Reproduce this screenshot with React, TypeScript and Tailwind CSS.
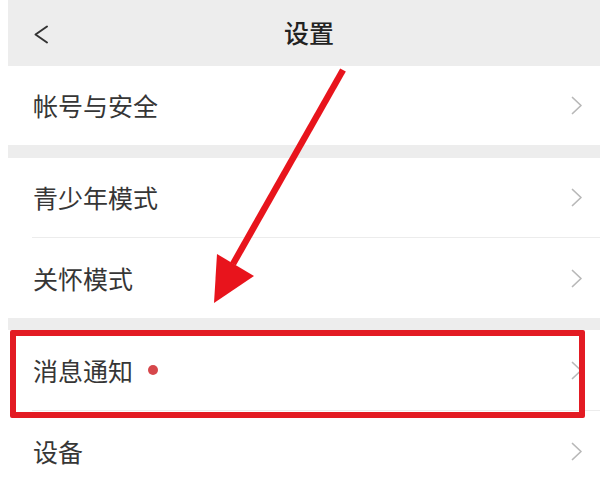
const font = { fontFamily: '"Noto Sans CJK SC", "Noto Sans", sans-serif' };

function Chevron() {
  return (
    <svg width="12" height="19" viewBox="0 0 12 19" className="shrink-0">
      <polyline
        points="1.5,1.5 10,9.5 1.5,17.5"
        fill="none"
        stroke="#b8b8b8"
        strokeWidth="1.7"
        strokeLinecap="round"
        strokeLinejoin="round"
      />
    </svg>
  );
}

function Row({
  label,
  dot,
  divider,
  h = "h-[80px]",
}: {
  label: string;
  dot?: boolean;
  divider?: boolean;
  h?: string;
}) {
  return (
    <div className="bg-white">
      <div className={`flex items-center justify-between pl-[25px] pr-[17px] ${h}`}>
        <div className="flex items-center gap-[15px]">
          <span className="text-[25px] leading-none text-[#363636]">{label}</span>
          {dot && <span className="w-[10px] h-[10px] rounded-full bg-[#d6474b]" />}
        </div>
        <Chevron />
      </div>
      {divider && <div className="ml-[24px] h-px bg-[#ececec]" />}
    </div>
  );
}

export default function App() {
  return (
    <div className="relative w-[600px] h-[481px] overflow-hidden bg-white pl-[8px]" style={font}>
      <div className="flex flex-col bg-[#ededed]">
        {/* header */}
        <div className="relative flex items-center justify-center h-[66px]">
          <svg
            width="16"
            height="19"
            viewBox="0 0 16 19"
            className="absolute left-[25px] top-[25px]"
          >
            <polyline
              points="14,1.5 2.5,9.5 14,17.5"
              fill="none"
              stroke="#333333"
              strokeWidth="2"
              strokeLinecap="round"
              strokeLinejoin="round"
            />
          </svg>
          <span className="text-[25px] font-medium leading-none text-[#222222] pl-[10px] pb-[1px]">设置</span>
        </div>

        <Row label="帐号与安全" h="h-[79px]" />
        <div className="h-[13px]" />
        <Row label="青少年模式" divider h="h-[79px]" />
        <Row label="关怀模式" />
        <div className="h-[12px]" />
        <Row label="消息通知" dot divider h="h-[80px]" />
        <Row label="设备" />
      </div>

      {/* highlight box */}
      <div className="absolute left-[10px] top-[330px] w-[575px] h-[88px] border-[6px] border-[#e31b23] rounded-[2px] pointer-events-none" />

      {/* arrow */}
      <svg
        width="600"
        height="481"
        viewBox="0 0 600 481"
        className="absolute inset-0 pointer-events-none"
      >
        <line x1="343" y1="70" x2="233" y2="264" stroke="#e8141c" strokeWidth="6.5" />
        <polygon points="214,303 217,254 254,276" fill="#e8141c" />
      </svg>
    </div>
  );
}
